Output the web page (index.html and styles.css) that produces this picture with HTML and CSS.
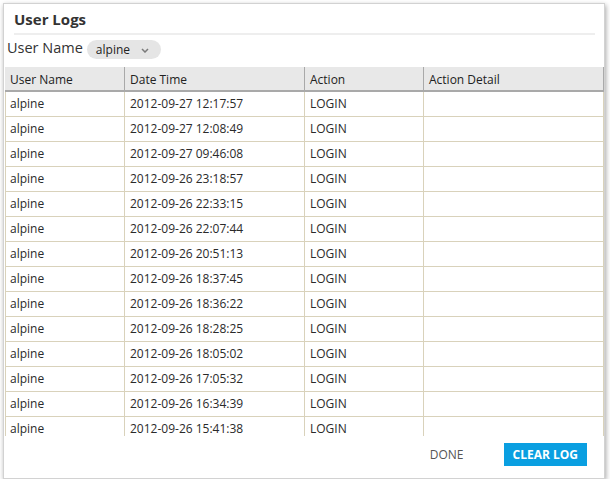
FILE: index.html
```html
<!DOCTYPE html>
<html>
<head>
<meta charset="utf-8">
<link rel="stylesheet" href="styles.css">
</head>
<body>
<div class="dialog">
  <div class="title">User Logs</div>
  <div class="sep"></div>
  <div class="filter">
    <span class="filter-label">User Name</span>
    <span class="pill">alpine
      <svg class="chev" width="8" height="5" viewBox="0 0 8 5"><polyline points="1,1 4,4 7,1" fill="none" stroke="#7a7a7a" stroke-width="1.5"/></svg>
    </span>
  </div>
  <div class="grid-wrap">
    <table class="grid">
      <colgroup><col class="c1"><col class="c2"><col class="c3"><col class="c4"></colgroup>
      <thead>
        <tr><th>User Name</th><th>Date Time</th><th>Action</th><th>Action Detail</th></tr>
      </thead>
      <tbody>
        <tr><td>alpine</td><td>2012-09-27 12:17:57</td><td>LOGIN</td><td></td></tr>
        <tr><td>alpine</td><td>2012-09-27 12:08:49</td><td>LOGIN</td><td></td></tr>
        <tr><td>alpine</td><td>2012-09-27 09:46:08</td><td>LOGIN</td><td></td></tr>
        <tr><td>alpine</td><td>2012-09-26 23:18:57</td><td>LOGIN</td><td></td></tr>
        <tr><td>alpine</td><td>2012-09-26 22:33:15</td><td>LOGIN</td><td></td></tr>
        <tr><td>alpine</td><td>2012-09-26 22:07:44</td><td>LOGIN</td><td></td></tr>
        <tr><td>alpine</td><td>2012-09-26 20:51:13</td><td>LOGIN</td><td></td></tr>
        <tr><td>alpine</td><td>2012-09-26 18:37:45</td><td>LOGIN</td><td></td></tr>
        <tr><td>alpine</td><td>2012-09-26 18:36:22</td><td>LOGIN</td><td></td></tr>
        <tr><td>alpine</td><td>2012-09-26 18:28:25</td><td>LOGIN</td><td></td></tr>
        <tr><td>alpine</td><td>2012-09-26 18:05:02</td><td>LOGIN</td><td></td></tr>
        <tr><td>alpine</td><td>2012-09-26 17:05:32</td><td>LOGIN</td><td></td></tr>
        <tr><td>alpine</td><td>2012-09-26 16:34:39</td><td>LOGIN</td><td></td></tr>
        <tr><td>alpine</td><td>2012-09-26 15:41:38</td><td>LOGIN</td><td></td></tr>
      </tbody>
    </table>
  </div>
  <div class="footer">
    <span class="btn-done">DONE</span>
    <span class="btn-clear">CLEAR LOG</span>
  </div>
</div>
</body>
</html>
```
FILE: styles.css
```css
html, body {
  margin: 0;
  padding: 0;
  background: #ffffff;
}
body {
  font-family: "Open Sans", "DejaVu Sans", sans-serif;
  color: #2a2a2a;
}
.dialog {
  box-sizing: border-box;
  margin: 3px 0 0 3px;
  width: 602px;
  height: 476px;
  border: 1px solid #d2d2d2;
  background: #ffffff;
  box-shadow: 1px 2px 5px rgba(0, 0, 0, 0.35);
  display: flex;
  flex-direction: column;
}
.title {
  padding: 5px 0 0 10px;
  font-size: 15px;
  line-height: 20px;
  font-weight: 700;
  color: #333333;
}
.sep {
  margin: 4px 9px 0 10px;
  height: 2px;
  background: #eeeeee;
}
.filter {
  margin-top: 5px;
  height: 19px;
  display: flex;
  align-items: flex-start;
  padding-left: 3px;
}
.filter-label {
  font-size: 14.5px;
  line-height: 15px;
  color: #333333;
}
.pill {
  margin-left: 4px;
  height: 19px;
  box-sizing: border-box;
  width: 74px;
  padding-left: 9px;
  border-radius: 10px;
  background: #e5e5e5;
  font-size: 12px;
  line-height: 19px;
  color: #222222;
  display: flex;
  align-items: center;
}
.chev {
  margin-left: 11px;
  margin-top: 1px;
}
.grid-wrap {
  margin-top: 8px;
  margin-left: 1px;
  height: 369px;
  overflow: hidden;
}
.grid {
  width: 599px;
  table-layout: fixed;
  border-collapse: separate;
  border-spacing: 0;
  font-size: 12px;
}
.c1 { width: 120px; }
.c2 { width: 180px; }
.c3 { width: 119px; }
.c4 { width: 180px; }
.grid th {
  background: #e8e8e8;
  text-align: left;
  font-weight: 400;
  padding: 4px 5px 2px;
  line-height: 17px;
  border-right: 1px solid #a9a9a9;
  border-bottom: 2px solid #a9a9a9;
  color: #222222;
  white-space: nowrap;
}
.grid td {
  height: 24px;
  padding: 0 5px;
  line-height: 24px;
  border-right: 1px solid #d9d2bb;
  border-bottom: 1px solid #d9d2bb;
  white-space: nowrap;
  box-sizing: content-box;
}
.grid td:first-child {
  border-left: 1px solid #d9d2bb;
  padding-left: 4px;
}
.footer {
  flex: 1;
  display: flex;
  justify-content: flex-end;
  align-items: flex-start;
  padding-top: 7px;
  padding-right: 17px;
}
.btn-done {
  font-size: 12px;
  line-height: 23px;
  color: #555555;
  margin-right: 40px;
}
.btn-clear {
  height: 23px;
  padding: 0 9px;
  background: #0a9fe1;
  color: #ffffff;
  font-weight: 700;
  font-size: 12px;
  line-height: 23px;
}
```
